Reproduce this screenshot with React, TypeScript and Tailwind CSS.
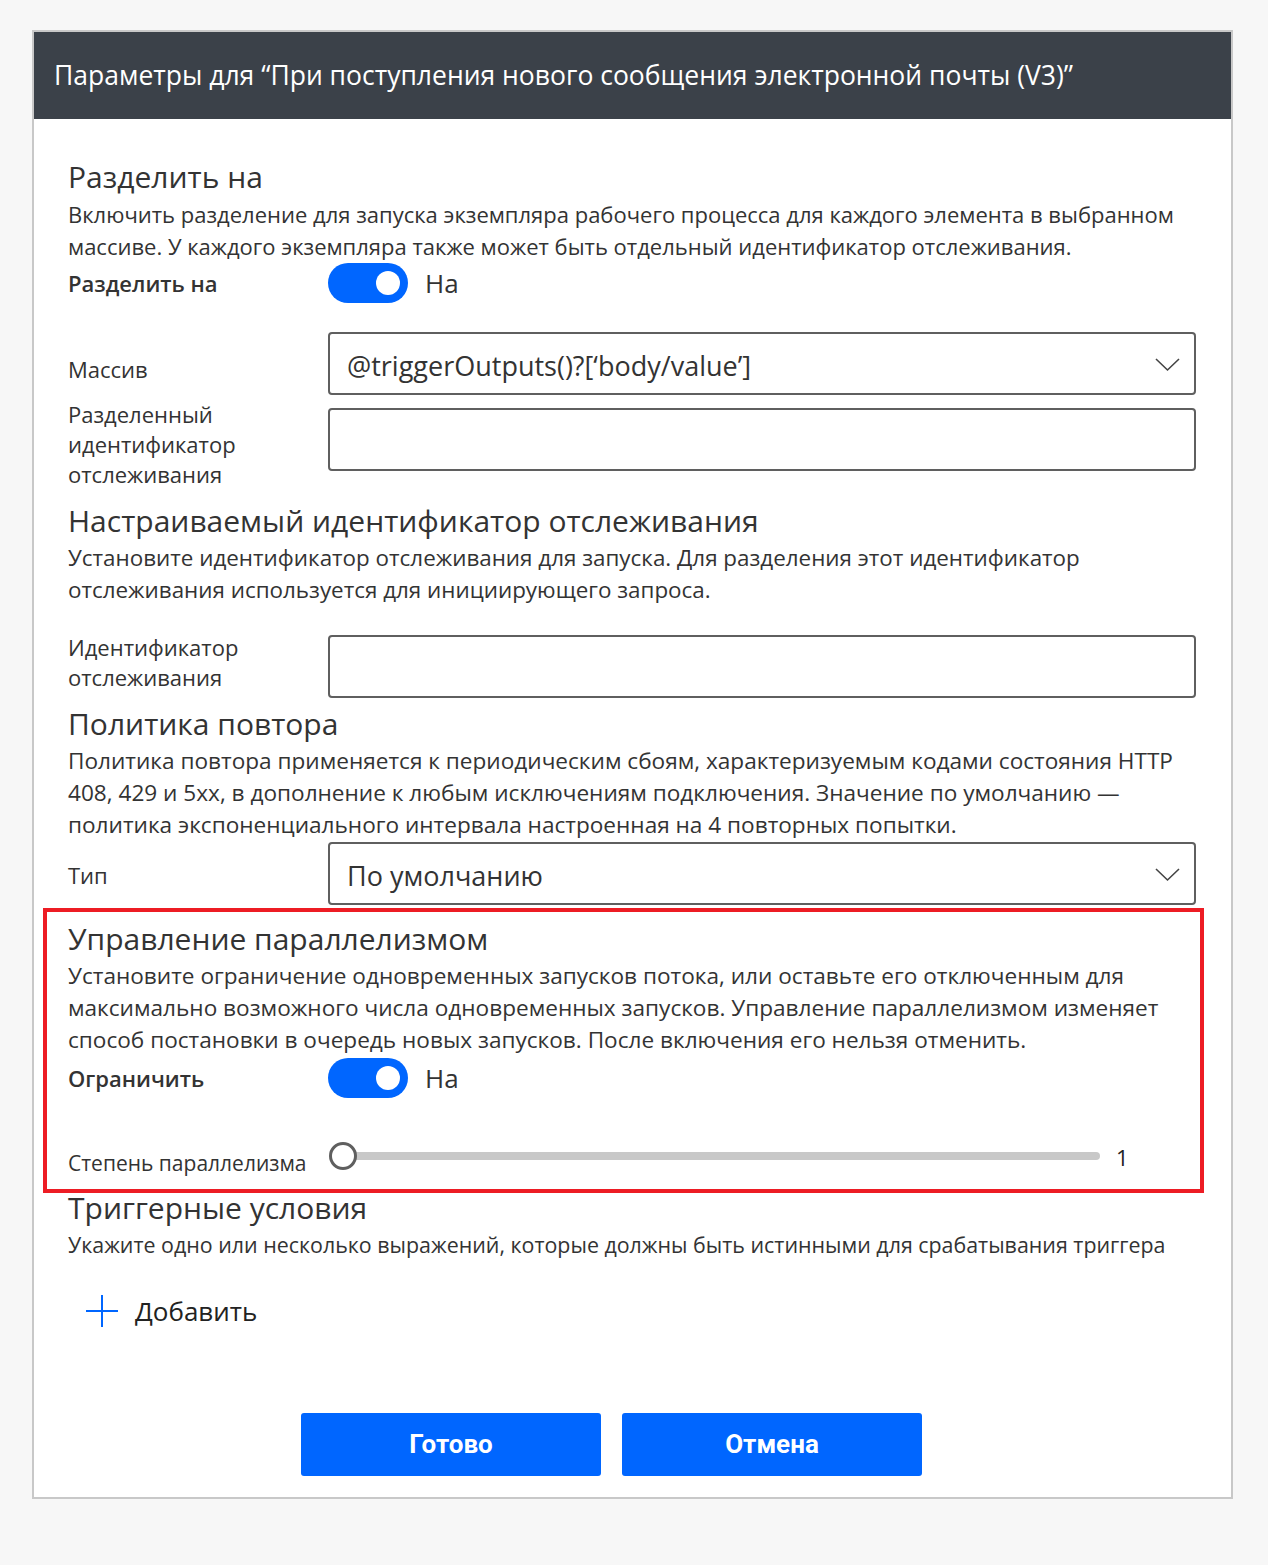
import React from "react";

const font = { fontFamily: '"Open Sans", "Noto Sans", sans-serif' };

function Toggle() {
  return (
    <div className="flex items-center">
      <div className="relative h-[40px] w-[80px] rounded-full bg-[#0066ff]">
        <div className="absolute right-[8px] top-[8px] h-[24px] w-[24px] rounded-full bg-white" />
      </div>
      <span className="ml-[17px] text-[26px] leading-[40px] text-[#333333]">На</span>
    </div>
  );
}

function Chevron() {
  return (
    <svg width="25" height="15" viewBox="0 0 25 15" className="mt-[2px] shrink-0">
      <path d="M1 2 L12.5 13 L24 2" fill="none" stroke="#444444" strokeWidth="1.6" />
    </svg>
  );
}

function Input({ value, dropdown }: { value?: string; dropdown?: boolean }) {
  return (
    <div className="flex h-[63px] w-[868px] items-center rounded-[4px] border-2 border-[#5f5f5f] pl-[17px] pr-[14px]">
      <span className="mt-[5px] flex-1 text-[27px] leading-[36px] text-[#333333]">{value}</span>
      {dropdown && <Chevron />}
    </div>
  );
}

function Heading({ children }: { children: React.ReactNode }) {
  return <div className="whitespace-nowrap text-[30px] leading-[36px] text-[#333333]">{children}</div>;
}

function Desc({ children, size }: { children: React.ReactNode; size: string }) {
  return <div className={"whitespace-nowrap leading-[32px] text-[#333333] " + size}>{children}</div>;
}

const labelCls = "w-[260px] shrink-0 text-[22px] leading-[30px] text-[#333333]";

export default function App() {
  return (
    <div className="min-h-[1565px] w-full bg-[#f7f7f7] pt-[30px]" style={font}>
      <div className="ml-[32px] w-[1201px] border-2 border-[#c8c8c8] bg-white">
        <div className="flex h-[87px] items-center bg-[#3b4149] pl-[20px]">
          <span className="whitespace-nowrap text-[26.5px] text-white">Параметры для “При поступления нового сообщения электронной почты (V3)”</span>
        </div>
        <div className="pl-[34px] pr-[34px]">
          <div className="mt-[40px]">
            <Heading>Разделить на</Heading>
            <div className="mt-[3px]">
              <Desc size="text-[22px]">
                Включить разделение для запуска экземпляра рабочего процесса для каждого элемента в выбранном
                <br />
                массиве. У каждого экземпляра также может быть отдельный идентификатор отслеживания.
              </Desc>
            </div>
          </div>
          <div className="mt-[1px] flex h-[40px] items-center">
            <div className={labelCls + " font-semibold"}>Разделить на</div>
            <Toggle />
          </div>
          <div className="mt-[29px] flex">
            <div className={labelCls + " pt-[22px]"}>Массив</div>
            <Input value="@triggerOutputs()?[‘body/value’]" dropdown />
          </div>
          <div className="mt-[13px] flex items-start">
            <div className={labelCls + " -mt-[9px]"}>
              Разделенный
              <br />
              идентификатор
              <br />
              отслеживания
            </div>
            <Input />
          </div>
          <div className="mt-[14px]">
            <Heading>Настраиваемый идентификатор отслеживания</Heading>
            <div className="mt-[3px]">
              <Desc size="text-[22.4px]">
                Установите идентификатор отслеживания для запуска. Для разделения этот идентификатор
                <br />
                отслеживания используется для инициирующего запроса.
              </Desc>
            </div>
          </div>
          <div className="mt-[29px] flex items-start">
            <div className={labelCls + " -mt-[3px]"}>
              Идентификатор
              <br />
              отслеживания
            </div>
            <Input />
          </div>
          <div className="mt-[8px]">
            <Heading>Политика повтора</Heading>
            <div className="mt-[3px]">
              <Desc size="text-[22.6px]">
                Политика повтора применяется к периодическим сбоям, характеризуемым кодами состояния HTTP
                <br />
                408, 429 и 5xx, в дополнение к любым исключениям подключения. Значение по умолчанию —
                <br />
                политика экспоненциального интервала настроенная на 4 повторных попытки.
              </Desc>
            </div>
          </div>
          <div className="mt-[1px] flex">
            <div className={labelCls + " pt-[18px]"}>Тип</div>
            <Input value="По умолчанию" dropdown />
          </div>
        </div>
        <div className="ml-[9px] mt-[3px] w-[1161px] border-4 border-[#ed1c24] pb-[19px] pl-[21px]">
          <div className="mt-[9px]">
            <Heading>Управление параллелизмом</Heading>
            <div className="mt-[3px]">
              <Desc size="text-[22.6px]">
                Установите ограничение одновременных запусков потока, или оставьте его отключенным для
                <br />
                максимально возможного числа одновременных запусков. Управление параллелизмом изменяет
                <br />
                способ постановки в очередь новых запусков. После включения его нельзя отменить.
              </Desc>
            </div>
          </div>
          <div className="mt-[2px] flex h-[40px] items-center">
            <div className={labelCls + " font-semibold"}>Ограничить</div>
            <Toggle />
          </div>
          <div className="mt-[44px] flex h-[28px] items-center">
            <div className="mt-[16px] w-[260px] shrink-0 whitespace-nowrap text-[21px] text-[#333333]">Степень параллелизма</div>
            <div className="relative flex h-[28px] w-[772px] items-center">
              <div className="ml-[14px] h-[8px] flex-1 rounded-full bg-[#c8c8c8]" />
              <div className="absolute left-[1px] top-0 h-[28px] w-[28px] rounded-full border-[3px] border-[#5f5f5f] bg-white" />
            </div>
            <span className="ml-[16px] mt-[2px] text-[22px] font-medium text-[#222222]">1</span>
          </div>
        </div>
        <div className="pl-[34px] pr-[34px]">
          <div className="-mt-[3px]">
            <Heading>Триггерные условия</Heading>
            <div className="mt-[3px]">
              <Desc size="text-[21.4px]">Укажите одно или несколько выражений, которые должны быть истинными для срабатывания триггера</Desc>
            </div>
          </div>
          <div className="ml-[18px] mt-[33px] flex items-center">
            <svg width="32" height="32" viewBox="0 0 32 32">
              <path d="M16 0 V32 M0 16 H32" stroke="#0066ff" strokeWidth="2" />
            </svg>
            <span className="ml-[17px] text-[26px] leading-[34px] text-[#222222]">Добавить</span>
          </div>
          <div className="ml-[233px] mt-[85px] flex gap-[21px] pb-[21px]">
            <button className="h-[63px] w-[300px] rounded-[3px] bg-[#0066ff] text-[26px] font-bold text-white" style={{ fontFamily: 'Roboto, sans-serif' }}>
              Готово
            </button>
            <button className="h-[63px] w-[300px] rounded-[3px] bg-[#0066ff] text-[26px] font-bold text-white" style={{ fontFamily: 'Roboto, sans-serif' }}>
              Отмена
            </button>
          </div>
        </div>
      </div>
    </div>
  );
}
